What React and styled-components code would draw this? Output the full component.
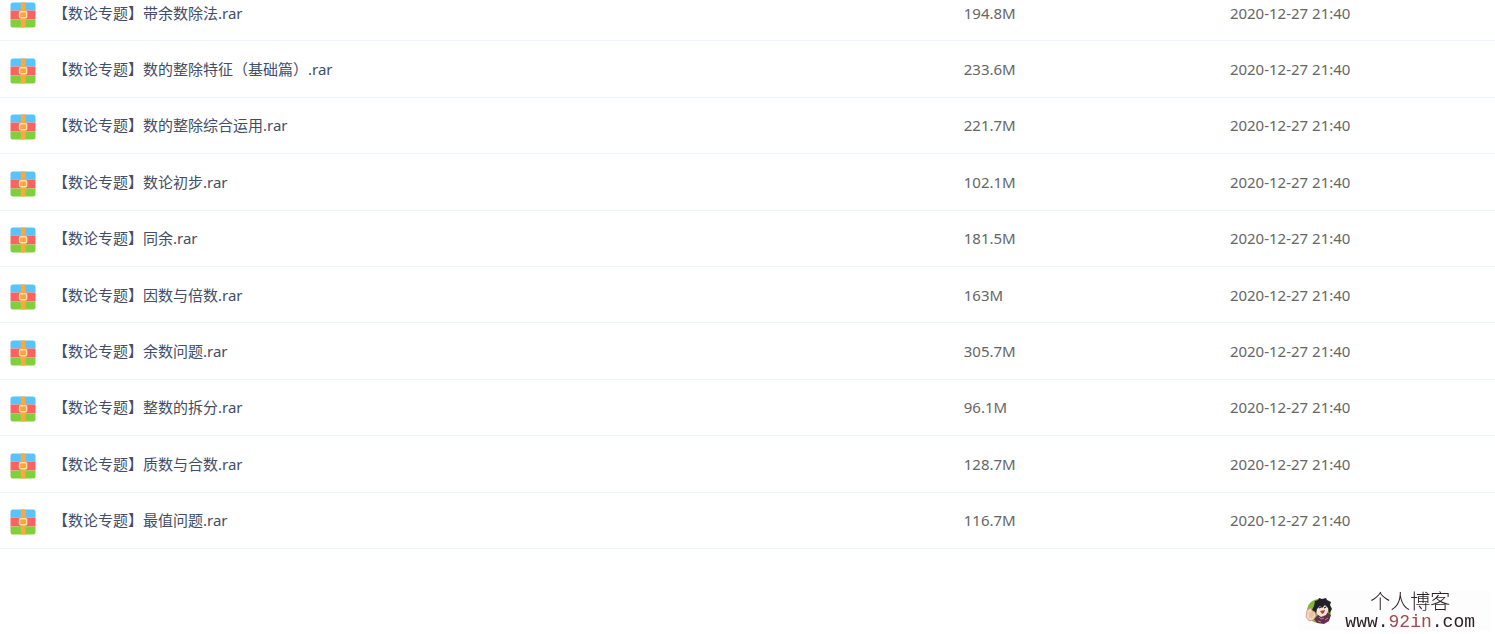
import styled, { createGlobalStyle } from 'styled-components';

const files = [
  { name: '【数论专题】带余数除法.rar', size: '194.8M', date: '2020-12-27 21:40' },
  { name: '【数论专题】数的整除特征（基础篇）.rar', size: '233.6M', date: '2020-12-27 21:40' },
  { name: '【数论专题】数的整除综合运用.rar', size: '221.7M', date: '2020-12-27 21:40' },
  { name: '【数论专题】数论初步.rar', size: '102.1M', date: '2020-12-27 21:40' },
  { name: '【数论专题】同余.rar', size: '181.5M', date: '2020-12-27 21:40' },
  { name: '【数论专题】因数与倍数.rar', size: '163M', date: '2020-12-27 21:40' },
  { name: '【数论专题】余数问题.rar', size: '305.7M', date: '2020-12-27 21:40' },
  { name: '【数论专题】整数的拆分.rar', size: '96.1M', date: '2020-12-27 21:40' },
  { name: '【数论专题】质数与合数.rar', size: '128.7M', date: '2020-12-27 21:40' },
  { name: '【数论专题】最值问题.rar', size: '116.7M', date: '2020-12-27 21:40' },
];

function ArchiveIcon() {
  return (
    <Icon viewBox="0 0 26 26" aria-hidden="true">
      <path d="M3 0.5h20a2.5 2.5 0 0 1 2.5 2.5v5.5h-25V3A2.5 2.5 0 0 1 3 0.5z" fill="#56c5fb" />
      <path d="M0.5 8.5h25v9h-25z" fill="#fb6260" />
      <path d="M0.5 17.5h25V23a2.5 2.5 0 0 1-2.5 2.5H3A2.5 2.5 0 0 1 0.5 23z" fill="#7fd13b" />
      <path d="M10.8 0.5h4.7v25h-4.7z" fill="#fca93c" />
      <rect x="9.6" y="9.8" width="7" height="6" rx="1" fill="#fca02f" stroke="#ffdfaa" strokeWidth="1.6" />
      <rect x="11.2" y="11.3" width="3.8" height="3" fill="#fda835" />
    </Icon>
  );
}

function Avatar() {
  return (
    <AvatarSvg viewBox="0 0 28 28" aria-hidden="true">
      <circle cx="14" cy="14" r="12" fill="#86b536" />
      <path d="M13 18l10-2 3 2-2 6-5 3-7-1-3-4z" fill="#63304c" />
      <path d="M12 5l6-2 5 3 1 6-3 6-5 2-4-3-2-5z" fill="#f8e3d7" />
      <path d="M9 9l1-5 3-1 1-2 3 1 4-1 1 2 4 2-1 3 2 4-3 5-1-6-3-3-3 3-2-2-3 3-1 5-2-3-2-1z" fill="#242029" />
      <path d="M14 11l2-1M19 11l2-1" stroke="#242029" strokeWidth="1.2" />
      <path d="M15 14l5-1-1 3-2 1z" fill="#b93d3f" />
      <path d="M2 13l4-2 1 3 3 1 1 4-3 4-4 1-3-4z" fill="#f4d5c0" stroke="#c98f78" strokeWidth="0.7" />
      <path d="M4 16h5M4 18h5M4 20h4" stroke="#cf957e" strokeWidth="0.6" />
      <path d="M14 20l2 2 3-1M20 23l3-2M13 24l3 1" stroke="#bd7b91" strokeWidth="1" fill="none" />
    </AvatarSvg>
  );
}

function App() {
  return (
    <>
      <GlobalStyle />
      <Main>
        <FileTable aria-label="文件列表">
          <tbody>
            {files.map((file) => (
              <tr key={file.name}>
                <NameCell>
                  <FileName>
                    <ArchiveIcon />
                    <FileLink href="#">{file.name}</FileLink>
                  </FileName>
                </NameCell>
                <InfoCell>{file.size}</InfoCell>
                <InfoCell>{file.date}</InfoCell>
              </tr>
            ))}
          </tbody>
        </FileTable>
      </Main>
      <Watermark>
        <Avatar />
        <BlogText>
          <BlogTitle>个人博客</BlogTitle>
          <BlogUrl>
            www.<em>92in</em>.com
          </BlogUrl>
        </BlogText>
      </Watermark>
    </>
  );
}

export default App;

// STYLES
const GlobalStyle = createGlobalStyle`
  body {
    margin: 0;
    background: #fff;
    font-family: 'Noto Sans', 'Noto Sans CJK SC', sans-serif;
    font-size: 15px;
    line-height: 20px;
    overflow: hidden;
  }
`;

const Main = styled.main`
  margin-top: -15px;
`;

const FileTable = styled.table`
  width: 100%;
  height: calc(100vh - 70px);
  table-layout: fixed;
  border-collapse: separate;
  border-spacing: 0;
`;

const Cell = styled.td`
  padding: 0;
  border-bottom: 1px solid #f0f5fd;
  vertical-align: middle;
`;

const NameCell = styled(Cell)`
  width: 64.4%;
`;

const InfoCell = styled(Cell)`
  width: 17.8%;
  padding-left: 1px;
  box-sizing: border-box;
  color: #666;
`;

const FileName = styled.div`
  display: flex;
  align-items: center;
  gap: 17px;
  padding-left: 10px;
`;

const Icon = styled.svg`
  width: 26px;
  height: 26px;
  margin-top: 4px;
  flex-shrink: 0;
`;

const FileLink = styled.a`
  color: #424e67;
  text-decoration: none;
`;

const Watermark = styled.aside`
  position: fixed;
  right: 4px;
  bottom: 3px;
  display: flex;
  align-items: center;
  gap: 12px;
  padding: 0 16px 0 7px;
  background: #fdfdfd;
`;

const AvatarSvg = styled.svg`
  width: 28px;
  height: 28px;
`;

const BlogText = styled.div`
  color: #2b2024;
`;

const BlogTitle = styled.div`
  font-family: 'Liberation Serif', 'Noto Sans CJK SC', serif;
  font-size: 20px;
  line-height: 22px;
  font-weight: 300;
  text-align: center;
`;

const BlogUrl = styled.div`
  font-family: 'Liberation Mono', monospace;
  font-size: 18px;
  line-height: 18px;

  em {
    color: #a04a4c;
    font-style: normal;
  }
`;
